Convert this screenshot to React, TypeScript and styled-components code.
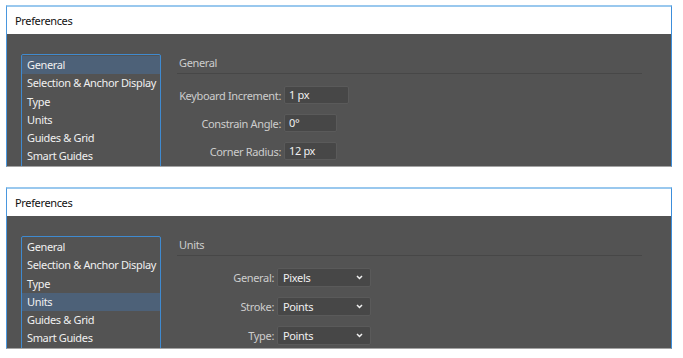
import styled, { createGlobalStyle } from "styled-components";

const GlobalStyle = createGlobalStyle`
  html, body {
    margin: 0;
    padding: 0;
    background: #ffffff;
  }
  body {
    font-family: "Noto Sans", "Liberation Sans", sans-serif;
    font-size: 11px;
    letter-spacing: -0.35px;
  }
`;

const categories = [
  "General",
  "Selection & Anchor Display",
  "Type",
  "Units",
  "Guides & Grid",
  "Smart Guides",
];

export default function App() {
  return (
    <Page>
      <GlobalStyle />
      <Panel title="Preferences" active="General" heading="General" labelWidth={104}>
        <Label>Keyboard Increment:</Label>
        <TextField $width={65}>1 px</TextField>
        <Label>Constrain Angle:</Label>
        <TextField $width={53}>0°</TextField>
        <Label>Corner Radius:</Label>
        <TextField $width={53}>12 px</TextField>
      </Panel>
      <Panel title="Preferences" active="Units" heading="Units" labelWidth={97}>
        <Label>General:</Label>
        <Select value="Pixels" />
        <Label>Stroke:</Label>
        <Select value="Points" />
        <Label>Type:</Label>
        <Select value="Points" />
      </Panel>
    </Page>
  );
}

function Panel(props: {
  title: string;
  active: string;
  heading: string;
  labelWidth: number;
  children: React.ReactNode;
}) {
  return (
    <Window>
      <TitleBar>{props.title}</TitleBar>
      <Body>
        <CategoryList>
          {categories.map((c) => (
            <Category key={c} $active={c === props.active}>
              {c}
            </Category>
          ))}
        </CategoryList>
        <Content>
          <Heading>{props.heading}</Heading>
          <Fields $labelWidth={props.labelWidth}>{props.children}</Fields>
        </Content>
      </Body>
    </Window>
  );
}

function Select({ value }: { value: string }) {
  return (
    <Dropdown>
      <span>{value}</span>
      <svg width="7" height="5" viewBox="0 0 7 5">
        <path d="M1 1 L3.5 3.5 L6 1" fill="none" stroke="#f2f2f2" strokeWidth="1.5" />
      </svg>
    </Dropdown>
  );
}

const Page = styled.div`
  display: flex;
  flex-direction: column;
  gap: 20px;
  padding: 5px 0 0 6px;
`;

const Window = styled.section`
  width: 664px;
  height: 159px;
  display: flex;
  flex-direction: column;
  border-top: 2px solid #99c8ee;
  border-left: 1px solid #4a97de;
  border-right: 1px solid #3c8edb;
  border-bottom: 1px solid #a3a3a3;
`;

const TitleBar = styled.header`
  height: 27px;
  flex-shrink: 0;
  display: flex;
  align-items: center;
  padding-left: 8px;
  background: #ffffff;
  color: #111111;
  font-size: 11px;
`;

const Body = styled.div`
  flex: 1;
  display: flex;
  background: #535353;
  overflow: hidden;
  padding: 20px 0 0 14px;
`;

const CategoryList = styled.ul`
  list-style: none;
  margin: 0;
  padding: 1px 0 0;
  width: 138px;
  height: 200px;
  flex-shrink: 0;
  border: 1px solid #3f8ad0;
  border-radius: 2px;
`;

const Category = styled.li<{ $active: boolean }>`
  height: 18.3px;
  line-height: 18px;
  padding-left: 5px;
  color: #f0f0f0;
  white-space: nowrap;
  background: ${(p) => (p.$active ? "#4d6178" : "transparent")};
`;

const Content = styled.div`
  width: 465px;
  margin-left: 16px;
  display: flex;
  flex-direction: column;
`;

const Heading = styled.h3`
  margin: 2px 0 0;
  padding: 0 0 4px 2px;
  height: 13px;
  line-height: 13px;
  font-size: 11px;
  font-weight: normal;
  color: #cdcdcd;
  border-bottom: 1px solid #474747;
`;

const Fields = styled.div<{ $labelWidth: number }>`
  display: grid;
  grid-template-columns: ${(p) => p.$labelWidth}px auto;
  justify-content: start;
  align-items: center;
  column-gap: 3px;
  row-gap: 10px;
  margin-top: 12px;
`;

const Label = styled.span`
  text-align: right;
  color: #cdcdcd;
  white-space: nowrap;
`;

const TextField = styled.div<{ $width: number }>`
  width: ${(p) => p.$width}px;
  height: 18px;
  box-sizing: border-box;
  padding-left: 4px;
  line-height: 16px;
  color: #f0f0f0;
  background: #474747;
  border: 1px solid #5a5a5a;
  border-radius: 2px;
`;

const Dropdown = styled.div`
  width: 94px;
  height: 19px;
  box-sizing: border-box;
  display: flex;
  align-items: center;
  justify-content: space-between;
  padding: 0 7px 0 5px;
  color: #f0f0f0;
  background: #474747;
  border: 1px solid #5a5a5a;
  border-radius: 2px;
`;
